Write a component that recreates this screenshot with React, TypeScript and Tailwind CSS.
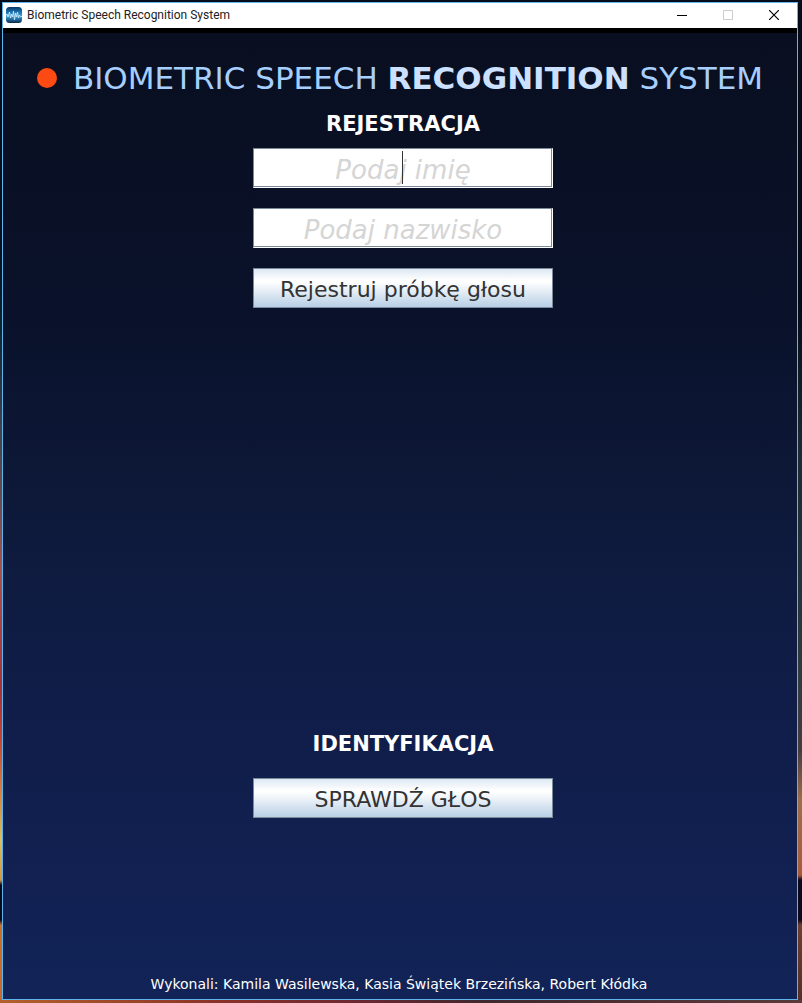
import React from "react";

const field =
  "block h-10 w-full border border-[#7a8a99] border-b-white border-r-white bg-white pt-1 text-center text-[26px] italic text-[#333] shadow-[inset_-1px_-1px_0_#7a8a99] outline-none placeholder:text-[#d5d5d5] placeholder:opacity-100";
const button =
  "block h-10 w-full border border-[#7a8a99] bg-[linear-gradient(#dde8f3_0%,#ffffff_30%,#ffffff_34%,#b8cfe5_100%)] pt-0.5 text-[22px] text-[#333]";
const heading = "text-center text-[21px] leading-6 font-bold text-white";

function AppIcon() {
  return (
    <svg width="16" height="16" viewBox="0 0 16 16" aria-hidden="true">
      <defs>
        <linearGradient id="tile" x1="0" y1="0" x2="0" y2="1">
          <stop offset="0" stopColor="#083763" />
          <stop offset="0.35" stopColor="#1f78b8" />
          <stop offset="0.6" stopColor="#3b9ad6" />
          <stop offset="1" stopColor="#062c50" />
        </linearGradient>
      </defs>
      <rect width="16" height="16" rx="3.5" fill="url(#tile)" />
      <path
        d="M0 8.5l1-1.5 1 3 1.5-5 1 6 1-4 1 3 1-6 1 9 1-7 1 4 1-5 1 6 1-3 1 1.5h1.5"
        stroke="#c4e6fb"
        strokeWidth="0.9"
        fill="none"
      />
    </svg>
  );
}

function Desktop({ children }: { children: React.ReactNode }) {
  return (
    <div className="bg-[linear-gradient(90deg,#b5602c,#8a3028_28%,#6b2832_45%,#40282e_60%,#5a3a3a)]">
      <div className="bg-[linear-gradient(#050d1a_0%,#06121c_25%,#12252f_33%,#3c4146_42%,#6a4c4c_50%,#a9524f_57%,#a83038_69%,#c94330_74%,#d88a40_80%,#d9c060_84%,#d99540_88%,#0a0a1c_88.5%,#0a0a1c_92%,#c8702c_92.5%,#c46a2c_100%),linear-gradient(#050d1a_0%,#020c18_30%,#1c2a34_45%,#24323a_58%,#303c40_68%,#453b40_75%,#9a6f4c_80%,#a65b3c_87.5%,#0a0a1c_88%,#0a0a1c_92%,#6b4030_92.5%,#52302c_100%)] bg-[length:50%_calc(100%-3px)] bg-[position:left_top,right_top] bg-no-repeat">
        {children}
      </div>
    </div>
  );
}

export default function App() {
  return (
    <Desktop>
      <div className="flex min-h-screen flex-col pt-0.5 pr-1 pb-[3px] pl-0.5 font-['DejaVu_Sans',sans-serif]">
        <div className="flex flex-1 flex-col border border-[#5fb4ee]">
          <header className="flex h-[25px] items-center bg-white pb-0.5 pl-[3px] text-black">
            <AppIcon />
            <span className="ml-[5px] flex-1 font-[Roboto,sans-serif] text-xs text-[#222]">
              Biometric Speech Recognition System
            </span>
            <button aria-label="Minimize" className="flex w-[46px] justify-center">
              <svg width="10" height="10" aria-hidden="true">
                <path d="M0 5.5h10" stroke="#000" />
              </svg>
            </button>
            <button aria-label="Maximize" disabled className="flex w-[46px] justify-center">
              <svg width="10" height="10" aria-hidden="true">
                <path d="M.5.5h9v9h-9z" fill="none" stroke="#ccc" />
              </svg>
            </button>
            <button aria-label="Close" className="flex w-[46px] justify-center">
              <svg width="10" height="10" aria-hidden="true">
                <path d="M0 0l10 10M10 0L0 10" stroke="#000" strokeWidth="1.2" />
              </svg>
            </button>
          </header>
          <main className="flex flex-1 flex-col items-center border-t-[5px] border-black bg-[linear-gradient(#090f20,#0a122b_30%,#0e1a3c_52%,#101d49_70%,#122357)] pl-1.5">
            <h1 className="mt-6 flex items-center gap-4 pr-1.5 text-[31px] leading-[42px] whitespace-nowrap text-[#a6ceff]">
              <span className="size-5 rounded-full bg-[#fb4a14]" />
              <span>
                BIOMETRIC SPEECH <b className="text-[#cce0ff]">RECOGNITION</b> SYSTEM
              </span>
            </h1>
            <form className="flex w-[300px] flex-1 flex-col gap-5" onSubmit={(e) => e.preventDefault()}>
              <h2 className={`${heading} mt-[13px] -mb-2`}>REJESTRACJA</h2>
              <div className="relative">
                <input aria-label="Imię" placeholder="Podaj imię" className={field} />
                <span className="absolute top-[3px] left-1/2 -ml-px h-[33px] w-px bg-[#333]" />
              </div>
              <input aria-label="Nazwisko" placeholder="Podaj nazwisko" className={field} />
              <button className={button}>Rejestruj próbkę głosu</button>
            </form>
            <section className="w-[300px]">
              <h2 className={`${heading} mb-[22px]`}>IDENTYFIKACJA</h2>
              <button className={button}>SPRAWDŹ GŁOS</button>
            </section>
            <footer className="mt-[156px] mb-[5px] pr-2 text-sm leading-5 text-white">
              Wykonali: Kamila Wasilewska, Kasia Świątek Brzezińska, Robert Kłódka
            </footer>
          </main>
        </div>
      </div>
    </Desktop>
  );
}
